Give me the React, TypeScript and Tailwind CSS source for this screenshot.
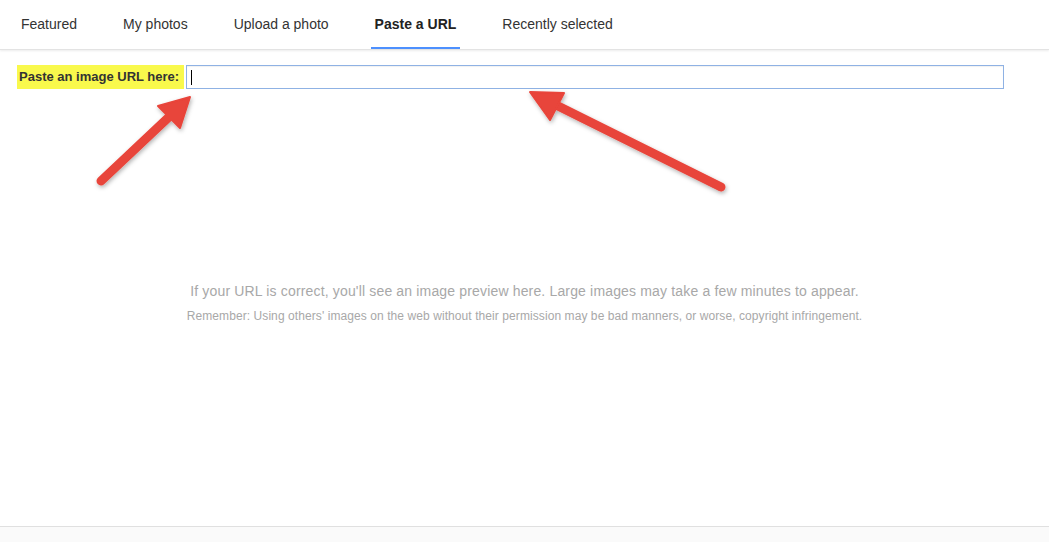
import React from "react";

const tabs = ["Featured", "My photos", "Upload a photo", "Paste a URL", "Recently selected"];

export default function App() {
  return (
    <div className="relative flex h-[542px] w-[1049px] flex-col overflow-hidden bg-white font-['Liberation_Sans',Arial,sans-serif]">
      <div className="flex h-[50px] shrink-0 items-stretch gap-[38px] border-b border-[#e3e3e3] pl-[17px] shadow-[0_1px_2px_rgba(0,0,0,0.08)]">
        {tabs.map((t) => {
          const active = t === "Paste a URL";
          return (
            <div
              key={t}
              className={
                active
                  ? "flex items-center border-b-2 border-[#4d90fe] px-1 pt-[2px] text-[14px] font-bold text-[#222]"
                  : "flex items-center border-b-2 border-transparent px-1 pt-[2px] text-[14px] text-[#333]"
              }
            >
              {t}
            </div>
          );
        })}
      </div>
      <div className="flex flex-1 flex-col">
        <div className="flex items-center pl-[17px] pt-[15px]">
          <label className="bg-[#f9f94c] py-[2px] pl-[2px] pr-[5px] text-[13px] font-bold text-[#333]">
            Paste an image URL here:
          </label>
          <div className="ml-[2px] flex h-[24px] w-[818px] items-center border border-[#8fb2e4] bg-white pl-[4px] shadow-[inset_0_1px_1px_rgba(0,0,0,0.06)]">
            <div className="h-[15px] w-px bg-black" />
          </div>
        </div>
        <div className="mt-[192px] flex flex-col items-center">
          <p className="text-[14px] tracking-[0.16px] text-[#a8a8a8]">
            If your URL is correct, you'll see an image preview here. Large images may take a few minutes to appear.
          </p>
          <p className="mt-[5px] text-[12px] tracking-[0.08px] text-[#a8a8a8]">
            Remember: Using others' images on the web without their permission may be bad manners, or worse, copyright infringement.
          </p>
        </div>
      </div>
      <div className="h-[16px] shrink-0 border-t border-[#e0e0e0] bg-[#fafafa]" />

      <svg className="pointer-events-none absolute left-0 top-0" width="1049" height="542">
        <defs>
          <filter id="sh" x="-20%" y="-20%" width="140%" height="140%">
            <feDropShadow dx="1" dy="2" stdDeviation="2" floodColor="#000" floodOpacity="0.3" />
          </filter>
        </defs>
        <g filter="url(#sh)" fill="#e8443a" stroke="#e8443a">
          <line x1="101" y1="181" x2="170" y2="116" strokeWidth="9" strokeLinecap="round" />
          <polygon points="190,97 180,128 158,106" strokeWidth="2" strokeLinejoin="round" />
          <line x1="721" y1="187" x2="556" y2="105" strokeWidth="9" strokeLinecap="round" />
          <polygon points="530,92 564,93 550,120" strokeWidth="2" strokeLinejoin="round" />
        </g>
      </svg>
    </div>
  );
}
